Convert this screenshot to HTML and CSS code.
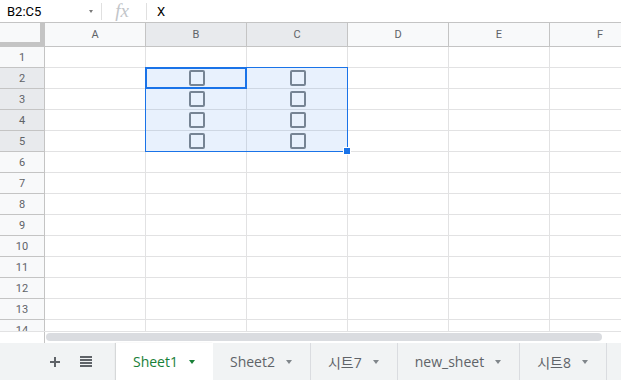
FILE: index.html
```html
<!DOCTYPE html>
<html>
<head>
<meta charset="utf-8">
<link rel="stylesheet" href="styles.css">
</head>
<body>
<div class="app">
  <div class="fbar">
    <div class="namebox"><span class="ref">B2:C5</span><span class="dd"></span></div>
    <div class="sep"></div>
    <div class="fx">fx</div>
    <div class="sep"></div>
    <div class="fval">X</div>
  </div>
  <div class="gridwrap">
    <div class="grid">
      <div class="corner"></div>
      <div class="ch">A</div><div class="ch sel">B</div><div class="ch sel">C</div><div class="ch">D</div><div class="ch">E</div><div class="ch">F</div>

      <div class="rh">1</div><div class="c"></div><div class="c"></div><div class="c"></div><div class="c"></div><div class="c"></div><div class="c"></div>
      <div class="rh sel">2</div><div class="c"></div><div class="c"><span class="cb"></span></div><div class="c"><span class="cb"></span></div><div class="c"></div><div class="c"></div><div class="c"></div>
      <div class="rh sel">3</div><div class="c"></div><div class="c"><span class="cb"></span></div><div class="c"><span class="cb"></span></div><div class="c"></div><div class="c"></div><div class="c"></div>
      <div class="rh sel">4</div><div class="c"></div><div class="c"><span class="cb"></span></div><div class="c"><span class="cb"></span></div><div class="c"></div><div class="c"></div><div class="c"></div>
      <div class="rh sel">5</div><div class="c"></div><div class="c"><span class="cb"></span></div><div class="c"><span class="cb"></span></div><div class="c"></div><div class="c"></div><div class="c"></div>
      <div class="rh">6</div><div class="c"></div><div class="c"></div><div class="c"></div><div class="c"></div><div class="c"></div><div class="c"></div>
      <div class="rh">7</div><div class="c"></div><div class="c"></div><div class="c"></div><div class="c"></div><div class="c"></div><div class="c"></div>
      <div class="rh">8</div><div class="c"></div><div class="c"></div><div class="c"></div><div class="c"></div><div class="c"></div><div class="c"></div>
      <div class="rh">9</div><div class="c"></div><div class="c"></div><div class="c"></div><div class="c"></div><div class="c"></div><div class="c"></div>
      <div class="rh">10</div><div class="c"></div><div class="c"></div><div class="c"></div><div class="c"></div><div class="c"></div><div class="c"></div>
      <div class="rh">11</div><div class="c"></div><div class="c"></div><div class="c"></div><div class="c"></div><div class="c"></div><div class="c"></div>
      <div class="rh">12</div><div class="c"></div><div class="c"></div><div class="c"></div><div class="c"></div><div class="c"></div><div class="c"></div>
      <div class="rh">13</div><div class="c"></div><div class="c"></div><div class="c"></div><div class="c"></div><div class="c"></div><div class="c"></div>
      <div class="rh">14</div><div class="c"></div><div class="c"></div><div class="c"></div><div class="c"></div><div class="c"></div><div class="c"></div>
    </div>
    <div class="range"></div>
    <div class="active"></div>
    <div class="handle"></div>
  </div>
  <div class="hscroll">
    <div class="hs-left"></div>
    <div class="hs-track"><div class="thumb"></div></div>
  </div>
  <div class="tabs">
    <div class="tools">
      <svg class="plus" width="10" height="10" viewBox="0 0 10 10"><path d="M5 0V10M0 5H10" stroke="#5f6368" stroke-width="2"/></svg>
      <svg class="menu" width="12" height="11" viewBox="0 0 12 11"><path d="M0 1H12M0 4H12M0 7H12M0 10H12" stroke="#5f6368" stroke-width="2"/></svg>
    </div>
    <div class="tab active-tab"><span>Sheet1</span><span class="arr"></span></div>
    <div class="tab"><span>Sheet2</span><span class="arr"></span></div>
    <div class="tab"><span>시트7</span><span class="arr"></span></div>
    <div class="tab"><span>new_sheet</span><span class="arr"></span></div>
    <div class="tab"><span>시트8</span><span class="arr"></span></div>
  </div>
</div>
</body>
</html>
```
FILE: styles.css
```css
* { box-sizing: border-box; }
html, body { margin: 0; padding: 0; background: #fff; }
body { font-family: Roboto, "Noto Sans CJK KR", sans-serif; }
.app { width: 621px; height: 380px; display: flex; flex-direction: column; overflow: hidden; }

.fbar { height: 22px; display: flex; align-items: center; flex: none; }
.namebox { width: 101px; display: flex; align-items: center; padding-left: 7px; }
.ref { font-size: 13px; color: #000; flex: 1; }
.dd { width: 0; height: 0; border-left: 2.5px solid transparent; border-right: 2.5px solid transparent; border-top: 3px solid #7a7a7a; margin-right: 8px; }
.sep { width: 1px; height: 17px; background: #e0e0e0; }
.fx { width: 44px; text-align: center; font-family: "Liberation Serif", serif; font-style: italic; font-size: 19px; color: #c2c5c9; line-height: 22px; padding-right: 4px; }
.fval { font-size: 13px; color: #000; padding-left: 10px; }

.gridwrap { position: relative; height: 309px; flex: none; overflow: hidden; }
.grid { display: grid; grid-template-columns: 45px repeat(6, 101px); grid-template-rows: 25px repeat(14, 21px); width: 651px; }
.corner { background: #f8f9fa; border-top: 1px solid #c4c4c4; border-right: 5px solid #c4c4c4; border-bottom: 5px solid #c4c4c4; }
.ch { background: #f8f9fa; border-top: 1px solid #c4c4c4; border-bottom: 1px solid #c4c4c4; border-right: 1px solid #c4c4c4; display: flex; align-items: center; justify-content: center; font-size: 11px; color: #5f6368; }
.ch.sel, .rh.sel { background: #e8eaed; }
.rh { background: #f8f9fa; border-right: 1px solid #c4c4c4; border-bottom: 1px solid #c4c4c4; display: flex; align-items: center; justify-content: center; font-size: 11px; color: #5f6368; }
.c { border-right: 1px solid #e2e2e3; border-bottom: 1px solid #e2e2e3; display: flex; align-items: center; justify-content: center; }
.cb { width: 16px; height: 16px; border: 2px solid #80868b; border-radius: 2px; margin-left: 1px; }

.range { position: absolute; left: 145px; top: 45px; width: 203px; height: 85px; border: 1px solid #1a73e8; background: rgba(26, 115, 232, 0.1); }
.active { position: absolute; left: 145px; top: 45px; width: 102px; height: 22px; border: 2px solid #1a73e8; }
.handle { position: absolute; left: 343px; top: 125px; width: 8px; height: 8px; background: #1a73e8; border: 1px solid #fff; }

.hscroll { height: 12px; flex: none; display: flex; border-top: 1px solid #e2e2e3; }
.hs-left { width: 45px; border-right: 1px solid #c4c4c4; }
.hs-track { flex: 1; padding: 1px 0 0 1px; }
.thumb { width: 556px; height: 8px; background: #dadce0; border-radius: 4px; }

.tabs { height: 37px; flex: none; background: #f1f3f4; display: flex; font-family: "Open Sans", "Noto Sans CJK KR", sans-serif; font-size: 14px; font-weight: 400; color: #5f6368; }
.tools { width: 116px; display: flex; align-items: center; padding-left: 50px; }
.plus { margin-right: 20px; }
.tab { display: flex; align-items: center; padding: 0 18px 0 17px; border-right: 1px solid #dadce0; }
.active-tab { background: #fff; color: #188038; border-right: none; box-shadow: -1px 0 1px rgba(60, 64, 67, 0.15); }
.arr { width: 0; height: 0; border-left: 3.5px solid transparent; border-right: 3.5px solid transparent; border-top: 4px solid currentColor; margin-left: 11px; margin-top: 1px; }
.tab .arr { border-top-color: #80868b; }
.active-tab .arr { border-top-color: #188038; }
```
